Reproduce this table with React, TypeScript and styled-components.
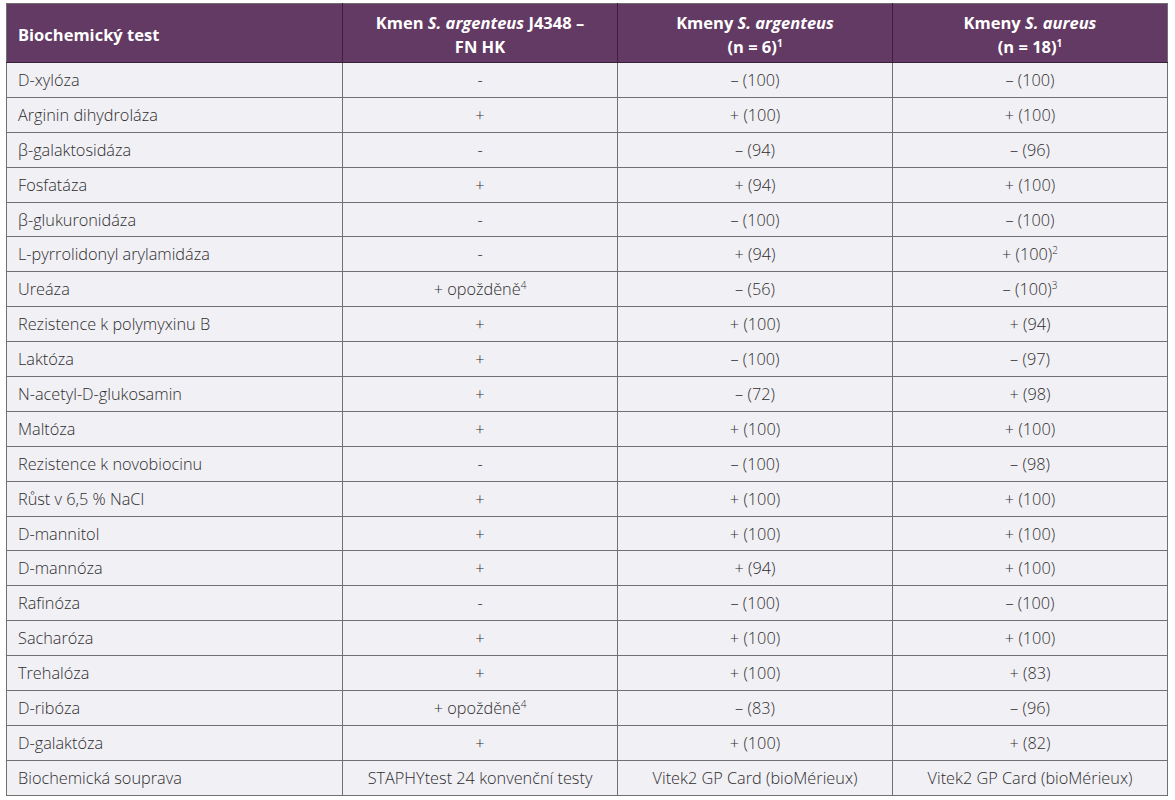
import React from "react";
import styled, { createGlobalStyle } from "styled-components";

const Global = createGlobalStyle`
  html, body { margin: 0; padding: 0; background: #ffffff; }
  body { font-family: "Open Sans", Lato, "Liberation Sans", sans-serif; }
`;

const Page = styled.div`
  padding: 3px 8px 0 6px;
`;

const Table = styled.table`
  border-collapse: collapse;
  width: 1161px;
  table-layout: fixed;
  border: 1px solid #707070;
`;

const HeadCell = styled.th<{ $left?: boolean }>`
  background: #633a63;
  color: #ffffff;
  font-family: "Open Sans", Lato, sans-serif;
  font-weight: 700;
  font-size: 16.5px;
  line-height: 24px;
  height: 55px;
  padding: 3px 11px 0;
  text-align: ${(p) => (p.$left ? "left" : "center")};
  vertical-align: middle;
  border-right: 1px solid #3a203a;
  border-bottom: 1px solid #3a203a;
  &:last-child { border-right: 1px solid #707070; }
`;

const Row = styled.tr`
  height: 34.9px;
  background: #f1f0f5;
`;

const Cell = styled.td<{ $left?: boolean }>`
  font-size: 16.3px;
  color: #2e2e2e;
  font-weight: 300;
  padding: 0 11px;
  text-align: ${(p) => (p.$left ? "left" : "center")};
  vertical-align: middle;
  border: 1px solid #707070;
  white-space: nowrap;
`;

const Sup = styled.sup`
  font-size: 10px;
  line-height: 0;
  vertical-align: super;
`;

type Val = { t: string; s?: string };
type R = [string, Val, Val, Val];

const v = (t: string, s?: string): Val => ({ t, s });

const rows: R[] = [
  ["D-xylóza", v("-"), v("– (100)"), v("– (100)")],
  ["Arginin dihydroláza", v("+"), v("+ (100)"), v("+ (100)")],
  ["β-galaktosidáza", v("-"), v("– (94)"), v("– (96)")],
  ["Fosfatáza", v("+"), v("+ (94)"), v("+ (100)")],
  ["β-glukuronidáza", v("-"), v("– (100)"), v("– (100)")],
  ["L-pyrrolidonyl arylamidáza", v("-"), v("+ (94)"), v("+ (100)", "2")],
  ["Ureáza", v("+ opožděně", "4"), v("– (56)"), v("– (100)", "3")],
  ["Rezistence k polymyxinu B", v("+"), v("+ (100)"), v("+ (94)")],
  ["Laktóza", v("+"), v("– (100)"), v("– (97)")],
  ["N-acetyl-D-glukosamin", v("+"), v("– (72)"), v("+ (98)")],
  ["Maltóza", v("+"), v("+ (100)"), v("+ (100)")],
  ["Rezistence k novobiocinu", v("-"), v("– (100)"), v("– (98)")],
  ["Růst v 6,5 % NaCl", v("+"), v("+ (100)"), v("+ (100)")],
  ["D-mannitol", v("+"), v("+ (100)"), v("+ (100)")],
  ["D-mannóza", v("+"), v("+ (94)"), v("+ (100)")],
  ["Rafinóza", v("-"), v("– (100)"), v("– (100)")],
  ["Sacharóza", v("+"), v("+ (100)"), v("+ (100)")],
  ["Trehalóza", v("+"), v("+ (100)"), v("+ (83)")],
  ["D-ribóza", v("+ opožděně", "4"), v("– (83)"), v("– (96)")],
  ["D-galaktóza", v("+"), v("+ (100)"), v("+ (82)")],
  [
    "Biochemická souprava",
    v("STAPHYtest 24 konvenční testy"),
    v("Vitek2 GP Card (bioMérieux)"),
    v("Vitek2 GP Card (bioMérieux)"),
  ],
];

const Value = ({ val }: { val: Val }) => (
  <>
    {val.t}
    {val.s && <Sup>{val.s}</Sup>}
  </>
);

export default function App() {
  return (
    <Page>
      <Global />
      <Table>
        <colgroup>
          <col style={{ width: 336 }} />
          <col style={{ width: 275 }} />
          <col style={{ width: 275 }} />
          <col style={{ width: 275 }} />
        </colgroup>
        <thead>
          <tr>
            <HeadCell $left>Biochemický test</HeadCell>
            <HeadCell>
              Kmen <i>S. argenteus</i> J4348 –<br />FN HK
            </HeadCell>
            <HeadCell>
              Kmeny <i>S. argenteus</i>
              <br />
              (n = 6)<Sup>1</Sup>
            </HeadCell>
            <HeadCell>
              Kmeny <i>S. aureus</i>
              <br />
              (n = 18)<Sup>1</Sup>
            </HeadCell>
          </tr>
        </thead>
        <tbody>
          {rows.map((r) => (
            <Row key={r[0]}>
              <Cell $left>{r[0]}</Cell>
              <Cell>
                <Value val={r[1]} />
              </Cell>
              <Cell>
                <Value val={r[2]} />
              </Cell>
              <Cell>
                <Value val={r[3]} />
              </Cell>
            </Row>
          ))}
        </tbody>
      </Table>
    </Page>
  );
}
